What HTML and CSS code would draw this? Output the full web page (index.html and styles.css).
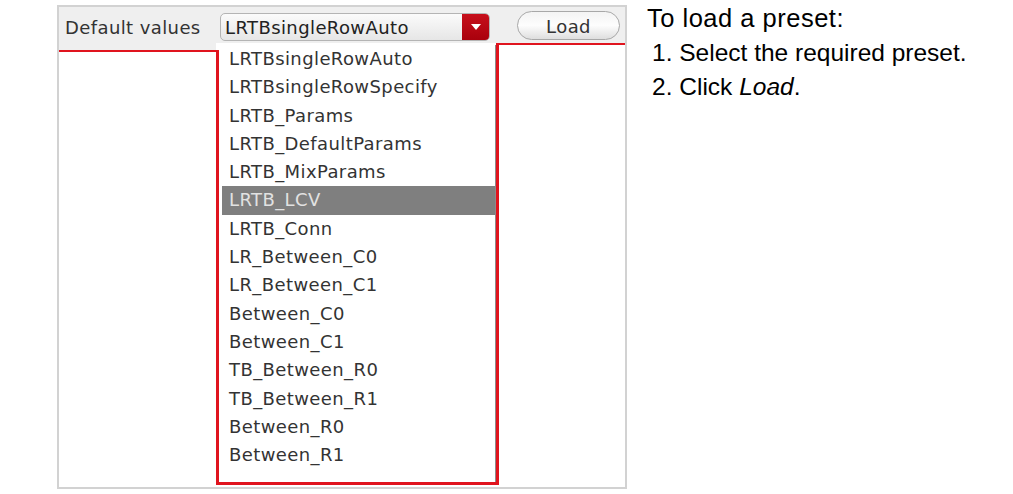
FILE: index.html
```html
<!DOCTYPE html>
<html>
<head>
<meta charset="utf-8">
<link rel="stylesheet" href="styles.css">
</head>
<body>
<div class="page">
  <div class="panel">
    <div class="header">
      <span class="label">Default values</span>
      <div class="select">
        <span class="select-text">LRTBsingleRowAuto</span>
        <span class="select-arrow">
          <svg width="12" height="8" viewBox="0 0 12 8"><path d="M1 1 L11 1 L6 7 Z" fill="#fff"/></svg>
        </span>
      </div>
      <button class="load">Load</button>
    </div>
    <div class="content"></div>
    <div class="mark-right"></div>
    <div class="popup">
      <ul class="items">
        <li>LRTBsingleRowAuto</li>
        <li>LRTBsingleRowSpecify</li>
        <li>LRTB_Params</li>
        <li>LRTB_DefaultParams</li>
        <li>LRTB_MixParams</li>
        <li class="selected">LRTB_LCV</li>
        <li>LRTB_Conn</li>
        <li>LR_Between_C0</li>
        <li>LR_Between_C1</li>
        <li>Between_C0</li>
        <li>Between_C1</li>
        <li>TB_Between_R0</li>
        <li>TB_Between_R1</li>
        <li>Between_R0</li>
        <li>Between_R1</li>
      </ul>
    </div>
  </div>
  <div class="help">
    <p class="help-title">To load a preset:</p>
    <ol class="steps">
      <li>Select the required preset.</li>
      <li>Click <em>Load</em>.</li>
    </ol>
  </div>
</div>
</body>
</html>
```

FILE: styles.css
```css
html, body {
  margin: 0;
  padding: 0;
  background: #fff;
}

.page {
  display: flex;
  align-items: flex-start;
  padding: 5px 0 0 57px;
}

.panel {
  position: relative;
  width: 570px;
  height: 484px;
  box-sizing: border-box;
  border: 2px solid #d2d2d2;
  display: flex;
  flex-direction: column;
  font-family: "DejaVu Sans", sans-serif;
  color: #333;
}

.header {
  height: 43px;
  flex: none;
  background: #efefef;
  display: flex;
  align-items: flex-start;
  padding-left: 6px;
  box-sizing: border-box;
}

.label {
  font-size: 18px;
  line-height: 20px;
  margin-top: 11px;
  width: 155px;
  letter-spacing: 0.4px;
}

.select {
  margin-top: 6px;
  width: 270px;
  height: 28px;
  box-sizing: border-box;
  border: 1px solid #b4b4b4;
  border-radius: 5px;
  background: linear-gradient(#fbfbfb, #e6e6e6);
  display: flex;
  align-items: center;
  overflow: hidden;
}

.select-text {
  flex: 1;
  font-size: 18px;
  padding-left: 4px;
  letter-spacing: 0.4px;
  color: #222;
}

.select-arrow {
  width: 28px;
  height: 28px;
  margin-right: -1px;
  background: linear-gradient(#c8101c, #a8000c);
  border-radius: 0 5px 5px 0;
  display: flex;
  align-items: center;
  justify-content: center;
}

.load {
  margin-top: 4px;
  margin-left: 27px;
  width: 103px;
  height: 29px;
  border: 1px solid #a8a8a8;
  border-radius: 15px;
  background: linear-gradient(#f4f4f4, #fdfdfd 50%, #dedede);
  font-family: "DejaVu Sans", sans-serif;
  font-size: 18px;
  color: #333;
  letter-spacing: 0.4px;
  padding: 2px 0 0;
}

.content {
  flex: 1;
  background: #fff;
  border-top: 2px solid #e0141e;
}

.mark-right {
  position: absolute;
  left: 440px;
  right: 0;
  top: 36px;
  height: 16px;
  box-sizing: border-box;
  background: #fff;
  border-top: 2px solid #e0141e;
}

.popup {
  position: absolute;
  left: 157px;
  top: 36px;
  width: 283px;
  height: 442px;
  box-sizing: border-box;
  background: #fff;
  border-right: 3px solid #e0141e;
  border-bottom: 3px solid #e0141e;
  padding: 2px 0 0 6px;
  z-index: 2;
}

.popup::before {
  content: "";
  position: absolute;
  left: 0;
  top: 7px;
  bottom: 0;
  width: 3px;
  background: #e0141e;
}

.items {
  list-style: none;
  margin: 0;
  padding: 0;
  height: 100%;
  border-right: 1px solid #8c8c8c;
}

.items li {
  height: 28.3px;
  line-height: 28.3px;
  padding-left: 7px;
  font-size: 18px;
  letter-spacing: 0.4px;
  color: #333;
  white-space: nowrap;
}

.items li.selected {
  background: #7f7f7f;
  color: #e2e2e2;
}

.help {
  margin-left: 20px;
  font-family: "Liberation Sans", Arial, sans-serif;
  font-size: 24.5px;
  line-height: 34px;
  color: #000;
  margin-top: -4px;
}

.help-title {
  margin: 0;
  font-size: 25.5px;
  letter-spacing: 0.5px;
}

.steps {
  margin: 1px 0 0;
  padding: 0 0 0 5px;
  list-style-position: inside;
}
```
